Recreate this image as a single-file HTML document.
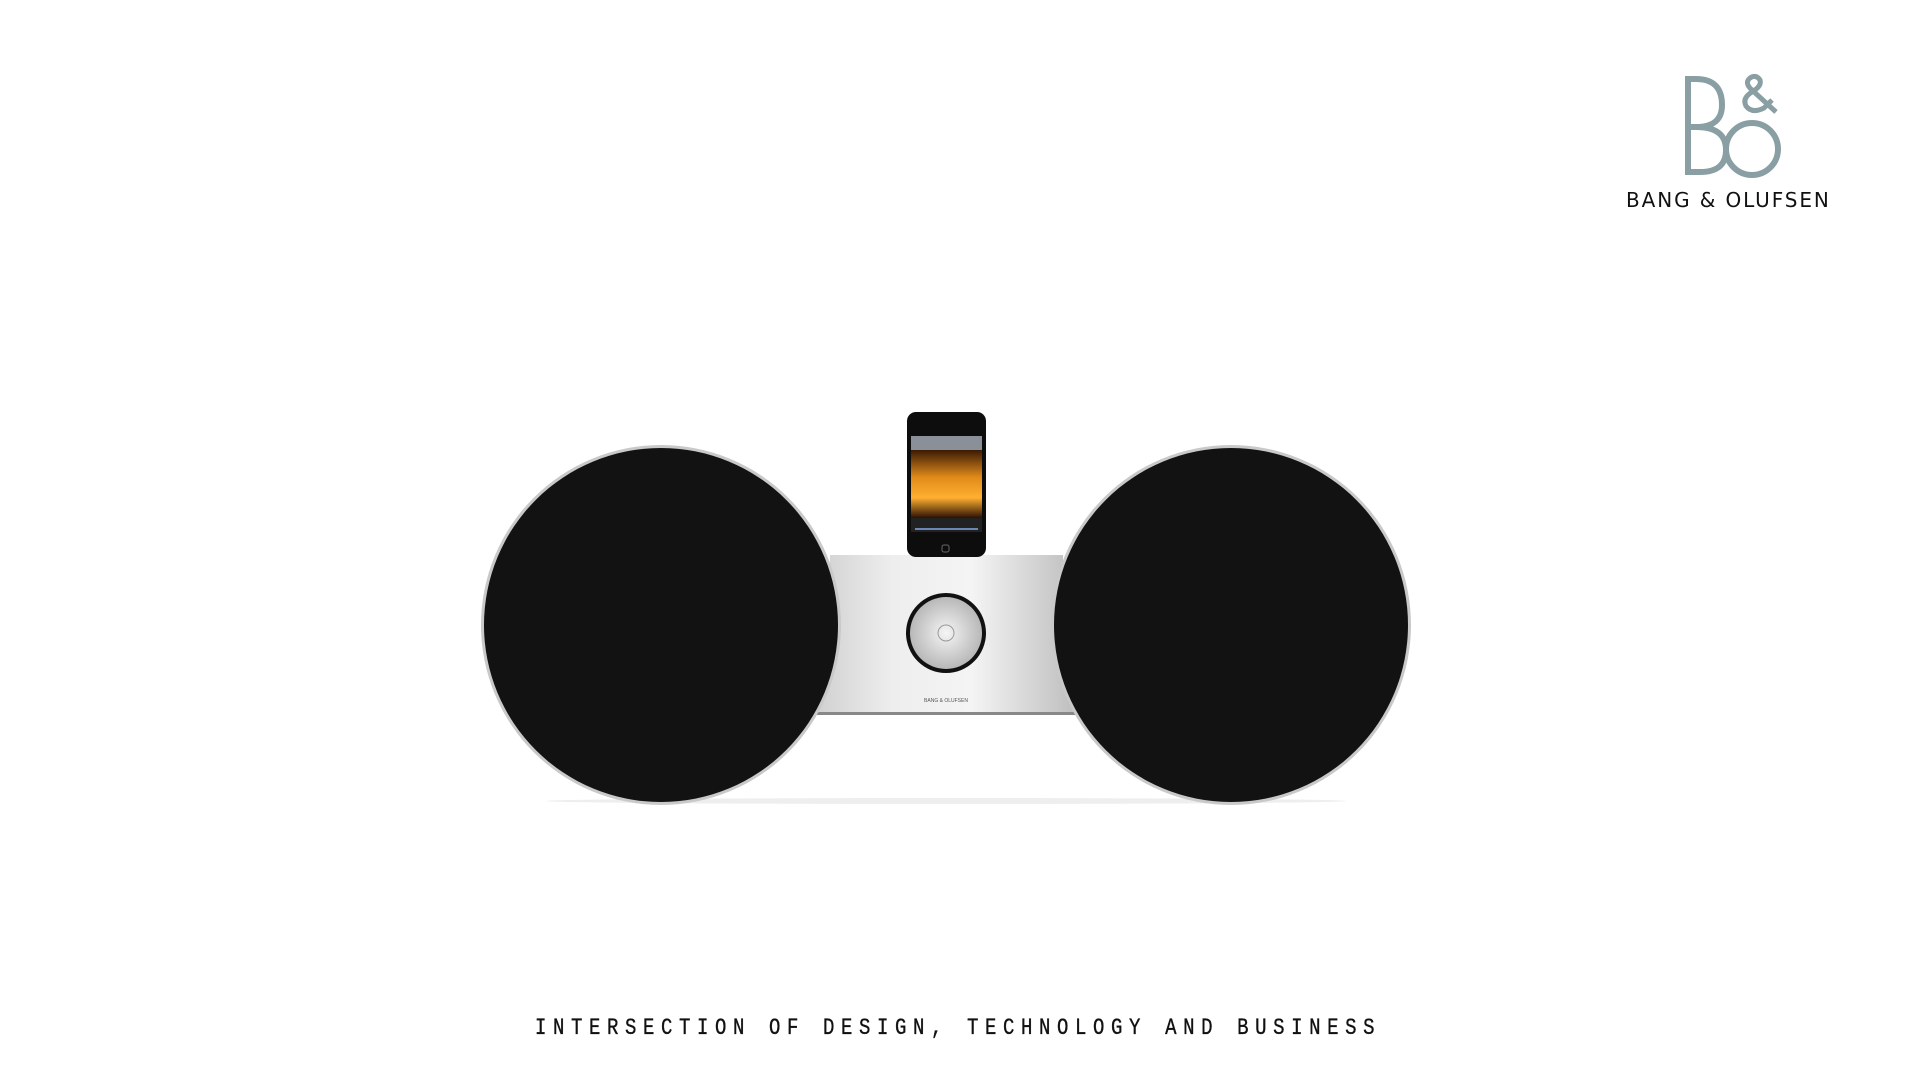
<!DOCTYPE html>
<html><head><meta charset="utf-8"><style>
html,body{margin:0;padding:0;background:#fff;width:1920px;height:1080px;overflow:hidden;position:relative}
.t{position:absolute;left:535px;top:1017px;font-family:"Liberation Mono",monospace;font-size:19px;letter-spacing:6.6px;color:#111;white-space:nowrap;transform:scaleY(1.2);transform-origin:0 50%;-webkit-text-stroke:0.3px #111}
.bo{position:absolute;left:1626px;top:188px;font-family:"DejaVu Sans","Liberation Sans",sans-serif;font-size:20px;letter-spacing:1.9px;color:#111;white-space:nowrap}
</style></head><body>
<svg width="1920" height="1080" style="position:absolute;left:0;top:0">
<defs>
<linearGradient id="sil" x1="0" x2="1" y1="0" y2="0">
<stop offset="0" stop-color="#cfcfcf"/><stop offset="0.3" stop-color="#eeeeee"/><stop offset="0.6" stop-color="#f4f4f4"/><stop offset="1" stop-color="#bdbdbd"/></linearGradient>
<radialGradient id="kn" cx="0.5" cy="0.5" r="0.5"><stop offset="0" stop-color="#f5f5f5"/><stop offset="1" stop-color="#b8b8b8"/></radialGradient>
<linearGradient id="fire" x1="0" x2="0" y1="0" y2="1"><stop offset="0" stop-color="#3a1a05"/><stop offset="0.4" stop-color="#e08a1a"/><stop offset="0.7" stop-color="#ffb030"/><stop offset="1" stop-color="#2a1004"/></linearGradient>
</defs>
<ellipse cx="946" cy="801" rx="400" ry="3" fill="#eeeeee"/>
<path d="M830 555 L1063 555 Q1063 680 1078 714 L813 714 Q830 680 830 555 Z" fill="url(#sil)"/>
<rect x="813" y="712" width="265" height="3" fill="#888"/>
<text x="946" y="702" font-family="Liberation Sans" font-size="5" fill="#555" text-anchor="middle">BANG &amp; OLUFSEN</text>
<circle cx="946" cy="633" r="40" fill="#111"/>
<circle cx="946" cy="633" r="36" fill="url(#kn)"/>
<circle cx="946" cy="633" r="8" fill="none" stroke="#999" stroke-width="1"/>
<rect x="907" y="412" width="79" height="145" rx="9" fill="#0d0d0d"/>
<rect x="911" y="436" width="71" height="14" fill="#8a8f98"/>
<rect x="911" y="450" width="71" height="68" fill="url(#fire)"/>
<rect x="911" y="518" width="71" height="14" fill="#222"/>
<rect x="915" y="528" width="63" height="2" fill="#6d86b8"/>
<rect x="942" y="545" width="7" height="7" rx="2" fill="none" stroke="#666" stroke-width="1"/>
<circle cx="661" cy="625" r="180" fill="#c9c9c9"/>
<circle cx="661" cy="625" r="177" fill="#121212"/>
<circle cx="1231" cy="625" r="180" fill="#c9c9c9"/>
<circle cx="1231" cy="625" r="177" fill="#121212"/>
<g fill="none" stroke="#8a9fa3" stroke-width="6">
<path d="M1688 76 L1688 175 M1688 79 L1696 79 Q1722 79 1722 105 Q1722 127 1696 127 L1688 127 M1696 127 Q1726 127 1726 150 Q1726 172 1700 172 L1688 172"/>
<circle cx="1752" cy="149" r="26"/>
</g>
<g fill="none" stroke="#8a9fa3" stroke-width="5">
<path d="M1776 112 L1752 90 Q1744 83 1750 78 Q1756 74 1760 80 Q1762 86 1752 92 Q1742 98 1746 106 Q1752 114 1764 108 L1772 100"/>
</g>
</svg>
<div class="bo">BANG &amp; OLUFSEN</div>
<div class="t">INTERSECTION OF DESIGN, TECHNOLOGY AND BUSINESS</div>
</body></html>
